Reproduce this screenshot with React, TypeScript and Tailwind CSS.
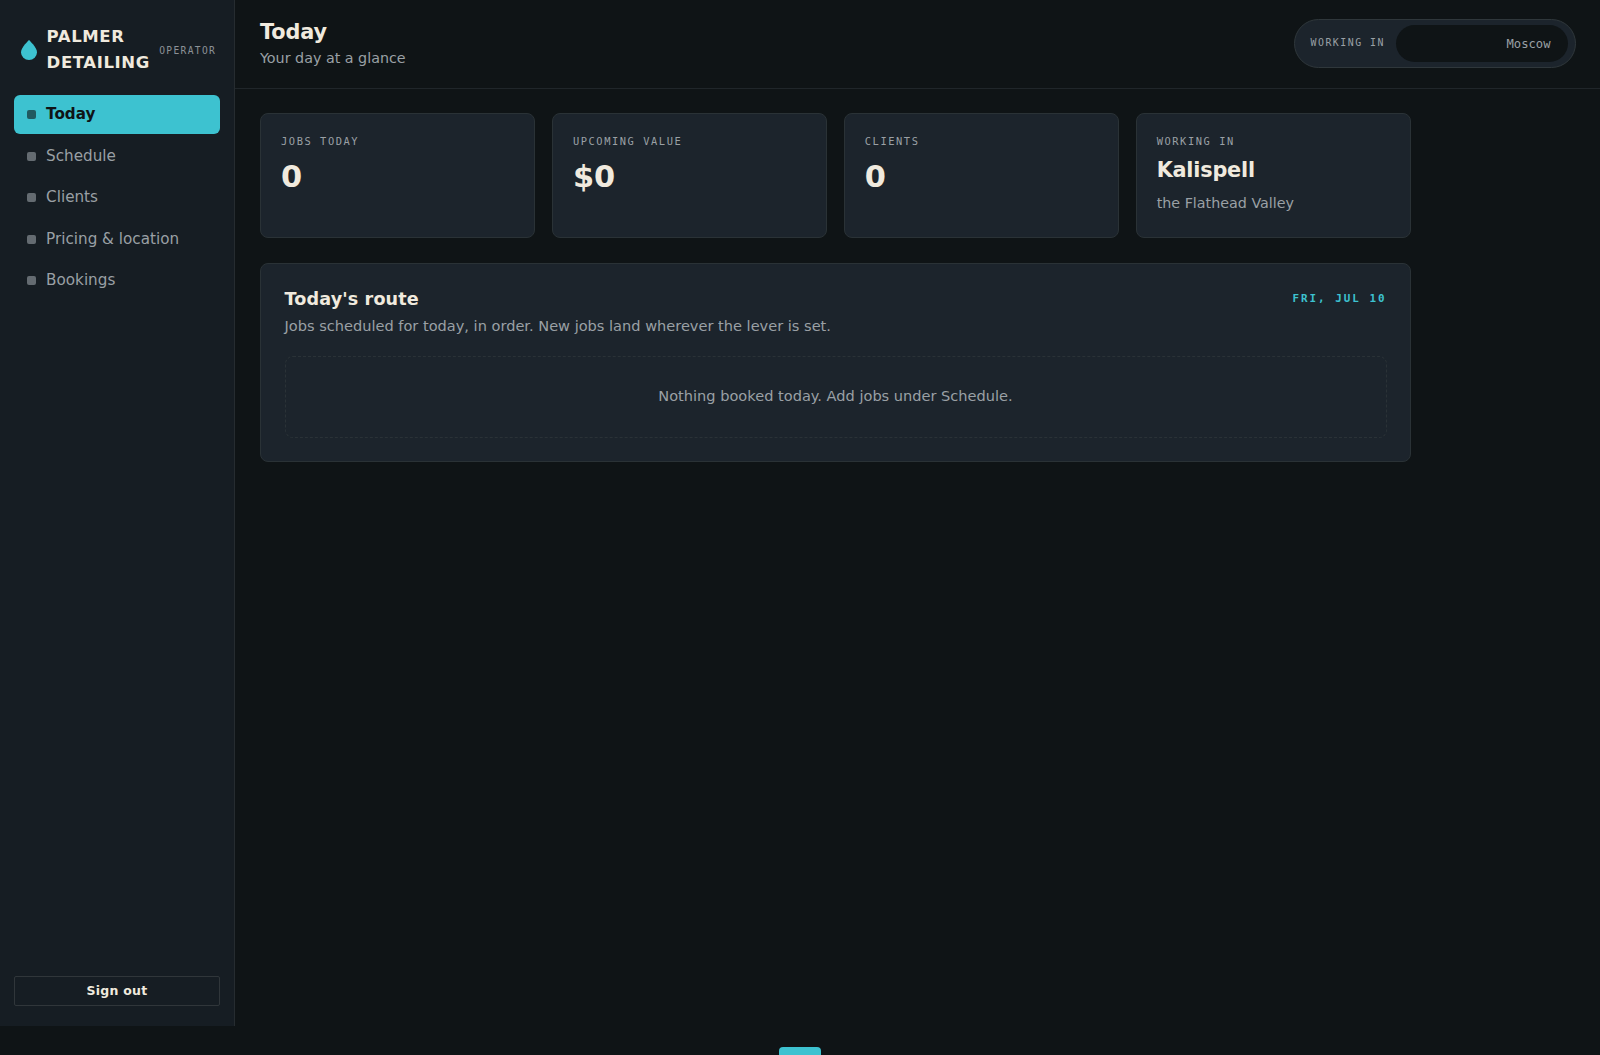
interface Stat {
    label: string
    value: string
    note?: string
}

const navItems = ['Today', 'Schedule', 'Clients', 'Pricing & location', 'Bookings']

const stats: Stat[] = [
    { label: 'Jobs today', value: '0' },
    { label: 'Upcoming value', value: '$0' },
    { label: 'Clients', value: '0' },
    { label: 'Working in', value: 'Kalispell', note: 'the Flathead Valley' },
]

function Sidebar() {
    return (
        <aside className="flex h-[1026px] w-[235px] shrink-0 flex-col border-r border-[#262c30] bg-[#161d23] px-[14px] pt-[24px] pb-[20px]">
            <div className="flex items-center gap-[9.6px] px-[7px]">
                <svg className="h-5 w-4 shrink-0" viewBox="0 0 16 20" fill="#3dc2d0">
                    <path d="M8 0C8 0 0 7.6 0 12.2a8 7.8 0 0 0 16 0C16 7.6 8 0 8 0Z" />
                </svg>
                <div className="w-[103px] shrink-0 text-[16.5px] leading-[25.5px] font-bold tracking-[0.6px] text-[#f0eade]">
                    PALMER DETAILING
                </div>
                <span className="pt-[3px] font-['DejaVu_Sans_Mono',monospace] text-[9.6px] tracking-[1.34px] text-[#8b9197] uppercase">
                    Operator
                </span>
            </div>

            <nav className="mt-[20px] flex flex-col gap-[2.4px]">
                {navItems.map((item, i) => (
                    <a
                        key={item}
                        className={
                            i === 0
                                ? 'flex h-[39.1px] items-center gap-[10.6px] rounded-[6px] bg-[#3dc2d0] px-[12.5px] text-[15.2px] font-bold text-[#0f1416]'
                                : 'flex h-[39.1px] items-center gap-[10.6px] rounded-[6px] px-[12.5px] text-[15.2px] text-[#9aa0a5]'
                        }
                    >
                        <span className="h-[9px] w-[9px] rounded-[2px] bg-current opacity-60" />
                        {item}
                    </a>
                ))}
            </nav>

            <button className="mt-auto h-[30px] rounded-[2px] border border-[#30363a] text-[12.5px] font-bold tracking-[0.25px] text-[#f0eade]">
                Sign out
            </button>
        </aside>
    )
}

function Header() {
    return (
        <header className="flex h-[89px] items-center justify-between border-b border-[#20262a] pr-6 pl-[25px]">
            <div className="pt-[2px]">
                <h1 className="text-[20.8px] leading-[27px] font-bold tracking-[-0.1px] text-[#f0eade]">Today</h1>
                <p className="text-[14.3px] leading-[25px] text-[#9aa0a5]">Your day at a glance</p>
            </div>
            <div className="mb-[2px] flex h-[49px] w-[282.5px] items-center justify-between rounded-full border border-[#2f373b] bg-[#1c242c] pr-[7px] pl-4 font-['DejaVu_Sans_Mono',monospace] text-[#9aa0a5]">
                <span className="text-[9.9px] tracking-[1.5px] uppercase">Working in</span>
                <div className="flex h-[37px] w-[172.5px] items-center justify-end rounded-full bg-[#0f1416] pt-[2px] pr-[17.5px] text-[12.2px]">
                    Moscow
                </div>
            </div>
        </header>
    )
}

function StatCard({ stat }: { stat: Stat }) {
    return (
        <div className="h-[125px] rounded-[8px] border border-[#2a3236] bg-[#1c242c] px-5 pt-[19px]">
            <div className="font-['DejaVu_Sans_Mono',monospace] text-[10.4px] leading-[17px] tracking-[1.56px] text-[#9aa0a5] uppercase">
                {stat.label}
            </div>
            {stat.note ? (
                <>
                    <div className="mt-[3px] text-[20.8px] leading-[34px] font-bold tracking-[-0.2px] text-[#f0eade]">{stat.value}</div>
                    <div className="mt-[3px] text-[14.3px] leading-[26px] text-[#9aa0a5]">{stat.note}</div>
                </>
            ) : (
                <div className="mt-[8px] text-[30.4px] leading-[38px] font-bold text-[#f0eade]">{stat.value}</div>
            )}
        </div>
    )
}

export default function App() {
    return (
        <div className="h-[1055px] overflow-hidden bg-[#0f1416] font-['DejaVu_Sans',sans-serif]">
            <div className="flex h-[1026px]">
                <Sidebar />
                <div className="flex-1">
                    <Header />
                    <main className="w-[1200px] pt-6 pr-6 pl-[25px]">
                        <div className="grid grid-cols-4 gap-[16.5px]">
                            {stats.map((stat) => (
                                <StatCard key={stat.label} stat={stat} />
                            ))}
                        </div>

                        <section className="mt-[25px] h-[199px] rounded-[8px] border border-[#2a3236] bg-[#1c242c] px-[23.5px] pt-[21px]">
                            <div className="flex items-start justify-between">
                                <h2 className="text-[17.6px] leading-[29px] font-bold tracking-[0.12px] text-[#f0eade]">Today's route</h2>
                                <span className="font-['DejaVu_Sans_Mono',monospace] text-[10.9px] leading-[27px] font-bold tracking-[2px] text-[#3dc2d0] uppercase">
                                    Fri, Jul 10
                                </span>
                            </div>
                            <p className="text-[14.57px] leading-[24px] text-[#9aa0a5]">
                                Jobs scheduled for today, in order. New jobs land wherever the lever is set.
                            </p>
                            <div className="mt-[18px] flex h-[82px] items-center justify-center rounded-[8px] border border-dashed border-[#2a3237] pb-[2px] text-[14.57px] text-[#9aa0a5]">
                                Nothing booked today. Add jobs under Schedule.
                            </div>
                        </section>
                    </main>
                </div>
            </div>

            {/* top edge of the button that sits below the fold */}
            <div className="mx-auto mt-[21px] h-10 w-[42px] rounded-[4px] bg-[#3dc2d0]" />
        </div>
    )
}
